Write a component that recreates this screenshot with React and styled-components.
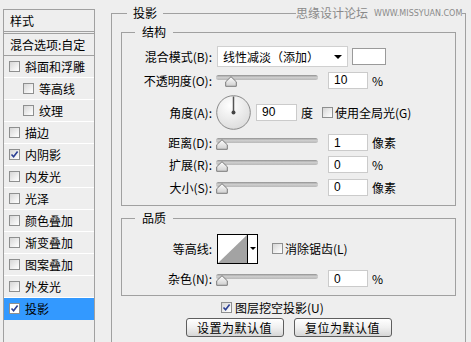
import React from 'react';
import styled, { createGlobalStyle } from 'styled-components';

const Global = createGlobalStyle`
  html, body { margin: 0; padding: 0; background: #eeeeee; }
  body {
    font-family: "Noto Sans CJK SC", "Noto Sans", sans-serif;
    font-size: 12px;
    color: #000;
  }
  #root { width: 471px; height: 342px; overflow: hidden; }
`;

const Page = styled.div`
  position: relative;
  display: flex;
  align-items: flex-start;
  width: 471px;
  height: 342px;
  overflow: hidden;
  background: #eeeeee;
`;

/* ---------- left style list ---------- */
const StylePanel = styled.div`
  flex-shrink: 0;
  margin: 9px 0 0 3px;
  width: 92px;
  height: 360px;
  box-sizing: border-box;
  border: 1px solid #a0a0a0;
`;

const PanelHead = styled.div`
  height: 21px;
  line-height: 21px;
  padding-left: 6px;
  border-bottom: 1px solid #a0a0a0;
  white-space: nowrap;
`;

const BlendRow = styled(PanelHead)`
  margin-top: 1px;
  border-top: 1px solid #a0a0a0;
`;

const StyleItem = styled.div`
  display: flex;
  align-items: center;
  gap: 5px;
  height: 21px;
  padding-left: ${p => (p.$indent ? 19 : 5)}px;
  border-bottom: 1px solid ${p => (p.$selected ? '#3399ff' : '#ffffff')};
  background: ${p => (p.$selected ? '#3399ff' : 'transparent')};
  white-space: nowrap;
`;

/* ---------- checkbox ---------- */
const Box = styled.span`
  flex-shrink: 0;
  display: inline-flex;
  align-items: center;
  justify-content: center;
  width: 11px;
  height: 11px;
  box-sizing: border-box;
  border: 1px solid #8e8f8f;
  background: ${p => (p.$white ? '#ffffff' : 'linear-gradient(135deg, #d6d6d6 0%, #f4f4f4 70%, #ffffff 100%)')};
  margin-left: ${p => p.$ml || 0}px;
`;

const Check = ({ checked, white, ml }) => (
  <Box $white={white} $ml={ml}>
    {checked && (
      <svg width="9" height="9" viewBox="0 0 9 9">
        <path d="M1.5 4.5 L3.6 6.8 L7.6 1.5" fill="none" stroke="#2b3f94" strokeWidth="1.6" />
      </svg>
    )}
  </Box>
);

/* ---------- right area ---------- */
const Frame = styled.fieldset`
  margin: 6px 0 0 16px;
  width: 355px;
  height: 400px;
  min-width: 0;
  box-sizing: border-box;
  border: 1px solid #a0a0a0;
  padding: 5px 9px 0 9px;
`;

const Legend = styled.legend`
  margin-left: ${p => p.$ml}px;
  padding: 0 ${p => p.$pad}px;
  font-size: 12px;
  line-height: 14px;
`;

const Group = styled.fieldset`
  margin: ${p => p.$mt || 0}px 0 0 0;
  min-width: 0;
  border: 1px solid #a0a0a0;
  padding: 6px 0 ${p => p.$pb}px 0;
`;

const Row = styled.div`
  display: flex;
  align-items: center;
  height: ${p => p.$h}px;
  white-space: nowrap;
`;

const Label = styled.span`
  flex-shrink: 0;
  width: 90px;
  margin-right: ${p => (p.$gap === undefined ? 4 : p.$gap)}px;
  text-align: right;
`;

const Select = styled.div`
  display: flex;
  align-items: center;
  justify-content: space-between;
  width: 131px;
  height: 21px;
  box-sizing: border-box;
  margin-left: 1px;
  padding: 0 5px 0 5px;
  background: #ffffff;
  border: 1px solid #d0d0d0;
`;

const Caret = styled.span`
  width: 0;
  height: 0;
  border-left: 4px solid transparent;
  border-right: 4px solid transparent;
  border-top: 4px solid #000;
`;

const Swatch = styled.div`
  width: 34px;
  height: 17px;
  box-sizing: border-box;
  margin-left: 4px;
  background: #ffffff;
  border: 1px solid #9a9a9a;
`;

const SliderWrap = styled.div`
  position: relative;
  flex-shrink: 0;
  width: 102px;
  height: 12px;
`;

const Track = styled.div`
  margin-top: 1px;
  height: 5px;
  border-radius: 3px;
  background: linear-gradient(#8f8f8f 0%, #cfcfcf 45%, #b8b8b8 100%);
  border: 0;
`;

const Thumb = styled.svg`
  position: absolute;
  top: 2px;
`;

const Slider = ({ value }) => (
  <SliderWrap>
    <Track />
    <Thumb width="12" height="11" viewBox="0 0 12 11" style={{ left: `${Math.round((value / 100) * 90)}px` }}>
      <defs>
        <linearGradient id="thumbg" x1="0" y1="0" x2="0" y2="1">
          <stop offset="0" stopColor="#ffffff" />
          <stop offset="1" stopColor="#cfcfcf" />
        </linearGradient>
      </defs>
      <path d="M6 0.7 L11.3 5.8 L11.3 10.3 L0.7 10.3 L0.7 5.8 Z" fill="url(#thumbg)" stroke="#7a7a7a" strokeWidth="1" />
    </Thumb>
  </SliderWrap>
);

const Field = styled.input`
  width: ${p => p.$w || 40}px;
  height: 17px;
  box-sizing: border-box;
  margin: 0 0 0 ${p => (p.$ml === undefined ? 10 : p.$ml)}px;
  padding: 0 0 0 5px;
  border: 1px solid #cbcbcb;
  background: #ffffff;
  font-family: "Liberation Sans", "Noto Sans", sans-serif;
  font-size: 12px;
  color: #000;
  outline: none;
`;

const Unit = styled.span`
  margin-left: ${p => p.$ml || 4}px;
`;

const Dial = () => (
  <svg width="35" height="35" viewBox="0 0 35 35" style={{ flexShrink: 0 }}>
    <defs>
      <radialGradient id="dialg" cx="0.4" cy="0.3" r="0.8">
        <stop offset="0" stopColor="#ffffff" />
        <stop offset="1" stopColor="#d9d9d9" />
      </radialGradient>
    </defs>
    <circle cx="17.5" cy="17.5" r="16.8" fill="url(#dialg)" stroke="#8a8a8a" strokeWidth="1" />
    <line x1="17.5" y1="17.5" x2="17.5" y2="1.5" stroke="#555" strokeWidth="1.5" />
    <circle cx="17.5" cy="17.5" r="2" fill="#444" />
  </svg>
);

const ContourBox = styled.div`
  display: flex;
  margin-left: 1px;
  width: 41px;
  height: 30px;
  box-sizing: border-box;
  border: 1px solid #000;
  background: #ffffff;
`;

const ContourArrow = styled.div`
  flex: 1;
  display: flex;
  align-items: center;
  justify-content: center;
  border-left: 1px solid #000;
`;

const SmallCaret = styled(Caret)`
  border-left-width: 3px;
  border-right-width: 3px;
  border-top-width: 3px;
`;

const CheckRow = styled.label`
  display: flex;
  align-items: center;
  gap: 3px;
  height: 22px;
  padding-left: 100px;
  white-space: nowrap;
`;

const ButtonRow = styled.div`
  display: flex;
  justify-content: center;
  gap: 10px;
`;

const Button = styled.button`
  width: 98px;
  height: 19px;
  padding: 0;
  box-sizing: border-box;
  border: 1px solid #5e5e5e;
  border-radius: 3px;
  background: linear-gradient(#ffffff 0%, #f0f0f0 50%, #d6d6d6 100%);
  font-family: "Noto Sans CJK SC", "Noto Sans", sans-serif;
  font-size: 12px;
  line-height: 16px;
  letter-spacing: 0.5px;
  color: #000;
`;

const Watermark = styled.div`
  position: absolute;
  top: 6px;
  left: 296px;
  display: flex;
  align-items: center;
  gap: 6px;
  height: 14px;
  background: #eeeeee;
  color: #8a8a8a;
  white-space: nowrap;
`;

const WmCn = styled.span`
  font-size: 12px;
  line-height: 14px;
`;

const WmEn = styled.span`
  font-family: "DejaVu Sans", sans-serif;
  font-size: 8px;
  line-height: 14px;
  padding-top: 2px;
`;

const items = [
  { name: '斜面和浮雕' },
  { name: '等高线', indent: true },
  { name: '纹理', indent: true },
  { name: '描边' },
  { name: '内阴影', checked: true },
  { name: '内发光' },
  { name: '光泽' },
  { name: '颜色叠加' },
  { name: '渐变叠加' },
  { name: '图案叠加' },
  { name: '外发光' },
  { name: '投影', checked: true, selected: true },
];

export default function App() {
  return (
    <Page>
      <Global />
      <StylePanel>
        <PanelHead>样式</PanelHead>
        <BlendRow>混合选项:自定</BlendRow>
        {items.map(it => (
          <StyleItem key={it.name} $indent={it.indent} $selected={it.selected}>
            <Check checked={it.checked} white={it.selected} />
            <span>{it.name}</span>
          </StyleItem>
        ))}
      </StylePanel>

      <Frame>
        <Legend $ml={6} $pad={6}>投影</Legend>
        <Group $pb={7}>
          <Legend $ml={13} $pad={7}>结构</Legend>
          <Row $h={23}>
            <Label $gap={4}>混合模式(B):</Label>
            <Select>
              <span>线性减淡（添加）</span>
              <Caret />
            </Select>
            <Swatch />
          </Row>
          <Row $h={24}>
            <Label>不透明度(O):</Label>
            <Slider value={10} />
            <Field readOnly value="10" />
            <Unit>%</Unit>
          </Row>
          <Row $h={40}>
            <Label>角度(A):</Label>
            <Dial />
            <Field readOnly value="90" $w={41} $ml={5} />
            <Unit>度</Unit>
            <Check ml={9} />
            <Unit $ml={2}>使用全局光(G)</Unit>
          </Row>
          <Row $h={21}>
            <Label>距离(D):</Label>
            <Slider value={0} />
            <Field readOnly value="1" />
            <Unit>像素</Unit>
          </Row>
          <Row $h={23}>
            <Label>扩展(R):</Label>
            <Slider value={0} />
            <Field readOnly value="0" />
            <Unit>%</Unit>
          </Row>
          <Row $h={22}>
            <Label>大小(S):</Label>
            <Slider value={0} />
            <Field readOnly value="0" />
            <Unit>像素</Unit>
          </Row>
        </Group>

        <Group $mt={5} $pb={4}>
          <Legend $ml={13} $pad={7}>品质</Legend>
          <Row $h={35}>
            <Label>等高线:</Label>
            <ContourBox>
              <svg width="29" height="28" viewBox="0 0 29 28">
                <path d="M0 28 L29 0 L29 28 Z" fill="#a3a3a3" />
              </svg>
              <ContourArrow>
                <SmallCaret />
              </ContourArrow>
            </ContourBox>
            <Check ml={14} />
            <Unit $ml={2}>消除锯齿(L)</Unit>
          </Row>
          <Row $h={25}>
            <Label>杂色(N):</Label>
            <Slider value={0} />
            <Field readOnly value="0" />
            <Unit>%</Unit>
          </Row>
        </Group>

        <CheckRow>
          <Check checked />
          <span>图层挖空投影(U)</span>
        </CheckRow>
        <ButtonRow>
          <Button>设置为默认值</Button>
          <Button>复位为默认值</Button>
        </ButtonRow>
      </Frame>

      <Watermark>
        <WmCn>思缘设计论坛</WmCn>
        <WmEn>WWW.MISSYUAN.COM</WmEn>
      </Watermark>
    </Page>
  );
}
